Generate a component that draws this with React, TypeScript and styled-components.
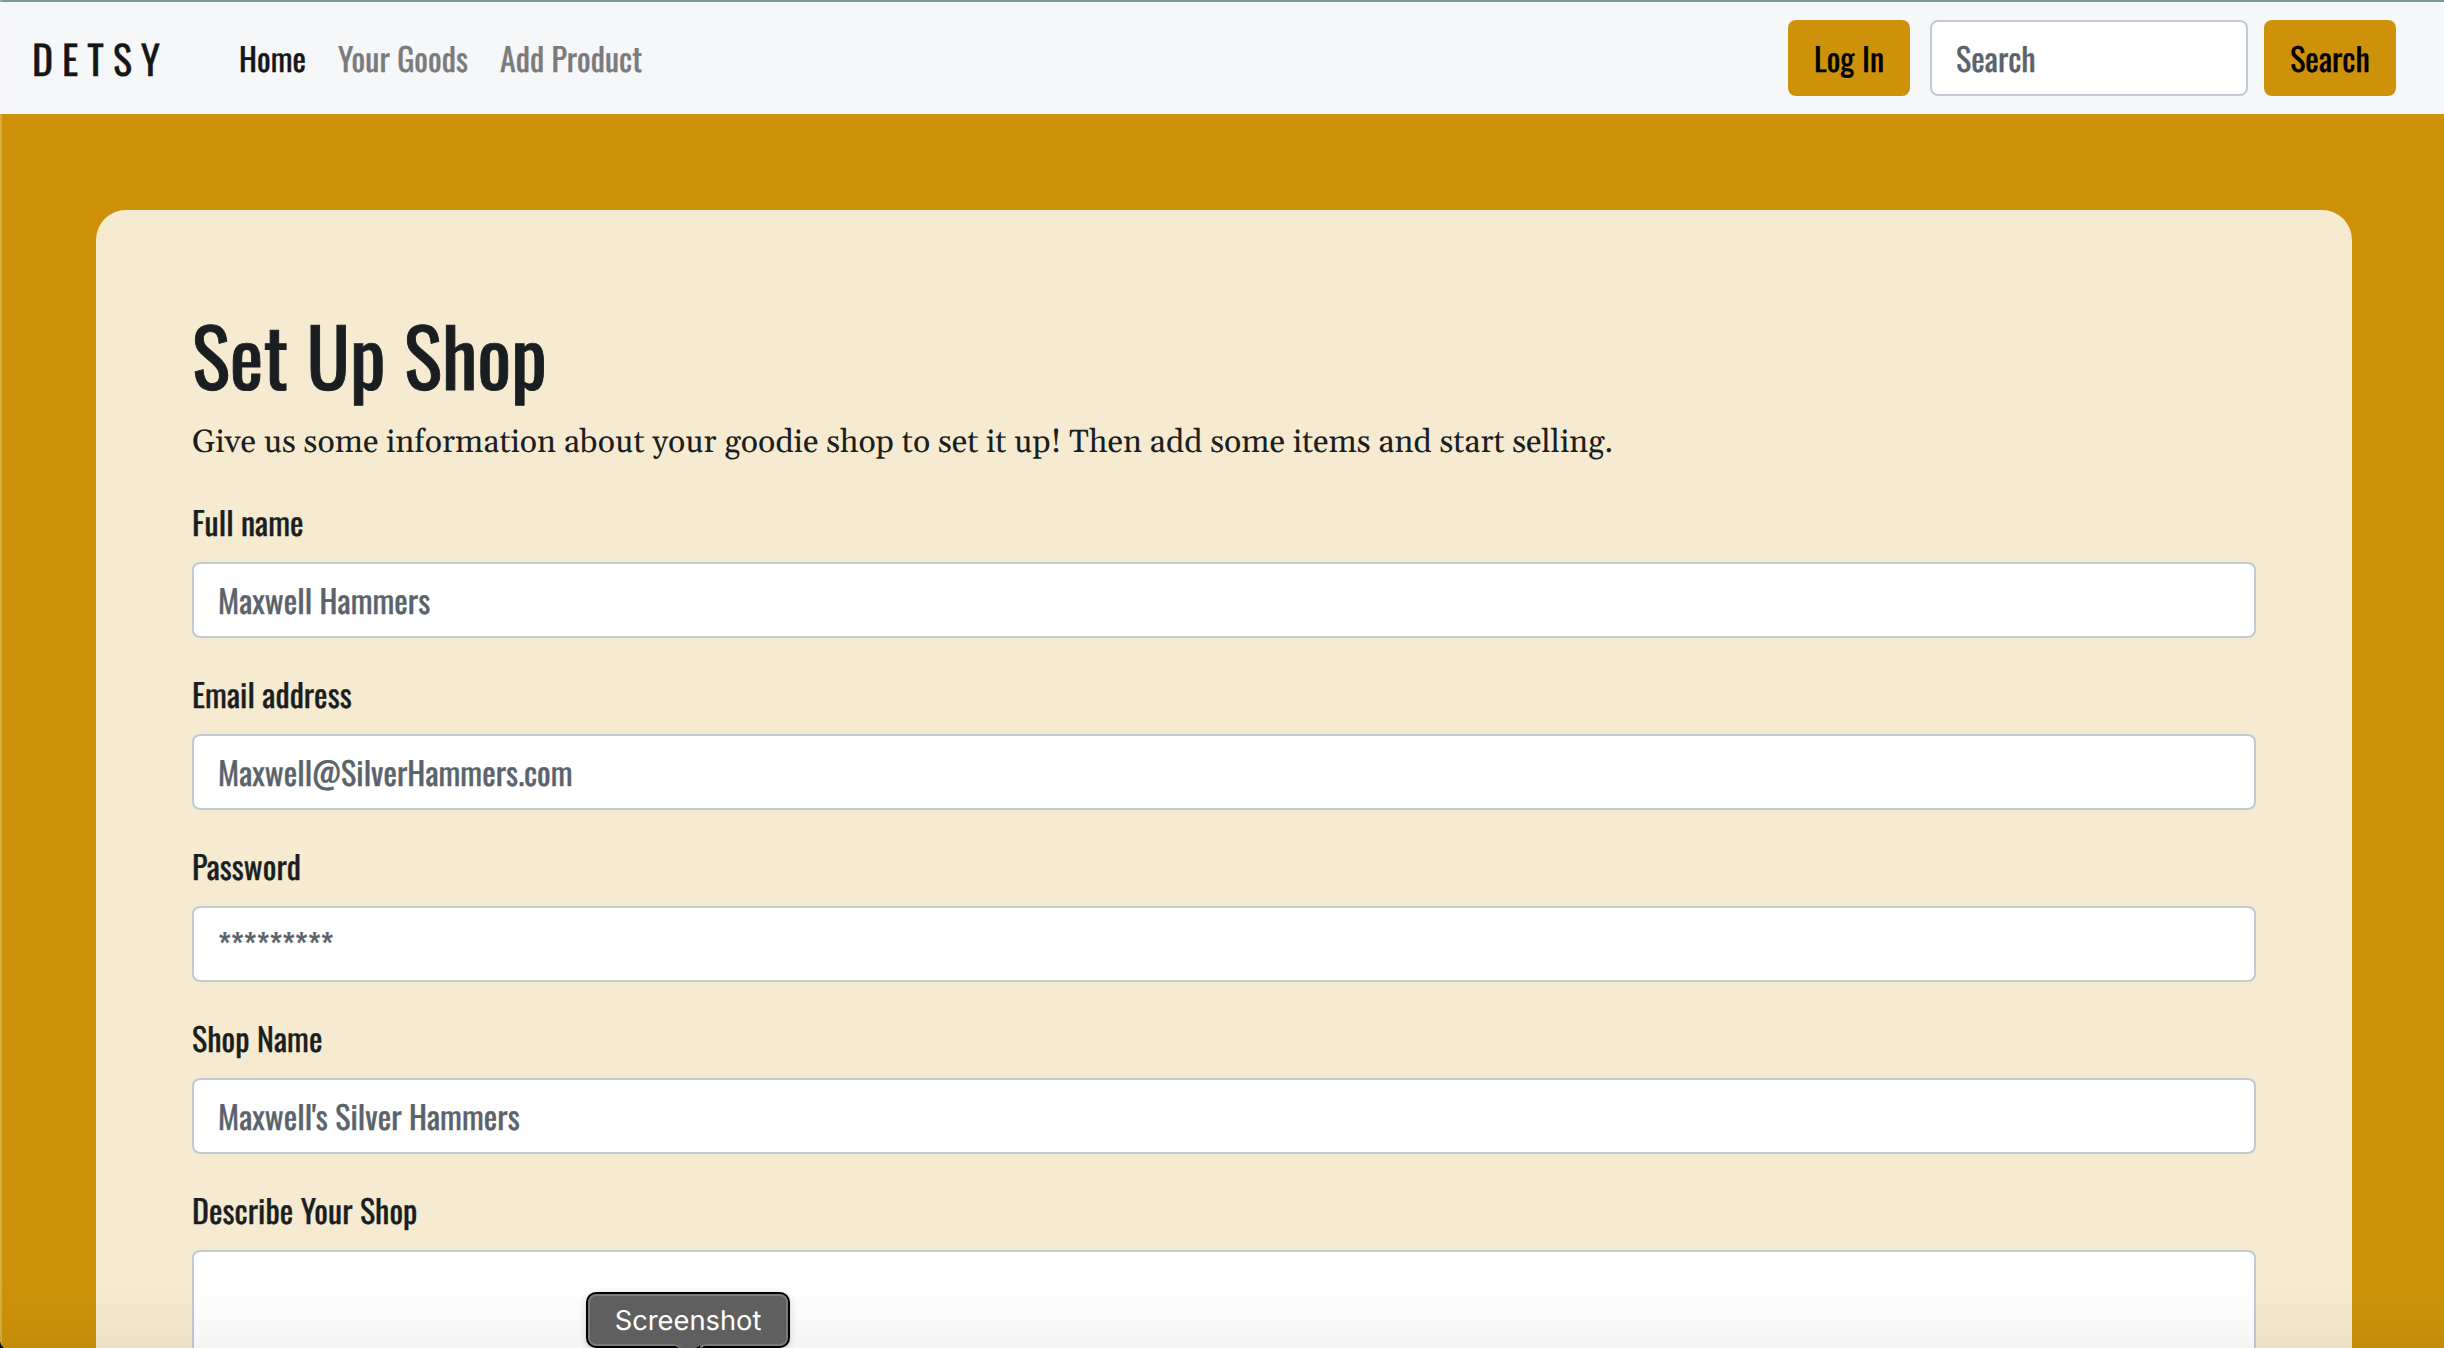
import React from "react";
import styled, { createGlobalStyle, css } from "styled-components";

const gold = "#cd9209";
const display = css`
  font-family: Oswald, "Roboto Condensed", sans-serif;
  font-size: 32px;
  font-weight: 400;
  line-height: 48px;
  letter-spacing: 0.07px;
  -webkit-text-stroke: 0.35px currentColor;
`;

const GlobalStyle = createGlobalStyle`
  *, *::before, *::after { box-sizing: border-box; text-rendering: geometricPrecision; }
  body { margin: 0; background: ${gold}; color: #1a1e21; overflow: hidden; }
  h1, p { margin: 0; }
`;

const Window = styled.div`
  position: relative;
  height: 1348px;
  overflow: hidden;
  background: ${gold};
`;

const Navbar = styled.nav`
  ${display}
  display: flex;
  align-items: center;
  height: 114px;
  padding: 0 48px 0 32px;
  border-top: 2px solid #76999a;
  background: #f6f7f9;
`;

const Brand = styled.a`
  font-size: 40px;
  line-height: 60px;
  letter-spacing: 9px;
  width: 207px;
  color: #161616;
`;

const Links = styled.div`
  display: flex;
  flex: 1;
  gap: 32px;
  padding-top: 2px;
`;

const NavLink = styled.a<{ $active?: boolean }>`
  color: ${(p) => (p.$active ? "#161616" : "#7b7b7c")};
`;

const Actions = styled.form`
  display: flex;
`;

const Button = styled.button<{ $width: number }>`
  ${display}
  width: ${(p) => p.$width}px;
  height: 76px;
  padding: 2px 0 0;
  border: 0;
  border-radius: 8px;
  background: ${gold};
  color: #000;
`;

const Input = styled.input`
  ${display}
  display: block;
  width: 100%;
  height: 76px;
  padding: 12px 24px;
  border: 2px solid #c3c9d3;
  border-radius: 8px;
  background: #fff;
  outline: 0;
  &::placeholder { color: #5a636c; -webkit-text-stroke-color: #5a636c; opacity: 1; }
`;

const SearchInput = styled(Input)`
  width: 318px;
  margin: 0 16px 0 20px;
`;

const TextArea = styled(Input).attrs({ as: "textarea" })`
  height: 220px;
  resize: none;
`;

const Card = styled.main`
  margin: 96px 92px 0 96px;
  height: 1400px;
  padding: 97px 96px 96px;
  border-radius: 30px;
  background: #f6ead0;
`;

const Title = styled.h1`
  ${display}
  font-size: 80px;
  line-height: 96px;
  letter-spacing: 0;
  margin-bottom: 16px;
  -webkit-text-stroke-width: 0.9px;
`;

const Lead = styled.p`
  font-family: Gelasio, Georgia, serif;
  font-size: 32px;
  line-height: 48px;
  margin-bottom: 30px;
`;

const Fields = styled.div`
  display: grid;
  gap: 31px;
`;

const Field = styled.label`
  ${display}
  display: grid;
  gap: 15px;
  padding-top: 1px;
  margin-bottom: 1px;
  &:first-child { padding-top: 2px; }
  &:first-child { margin-bottom: 1px; }
`;

const BottomShade = styled.div`
  position: absolute;
  inset: auto 0 0 0;
  height: 76px;
  background: linear-gradient(rgba(0, 0, 0, 0), rgba(0, 0, 0, 0.012) 45%, rgba(0, 0, 0, 0.042));
  pointer-events: none;
`;

const LeftEdge = styled.div`
  position: absolute;
  inset: 0 auto 0 0;
  width: 2px;
  background: rgba(255, 255, 255, 0.22);
`;

const Corner = styled.svg`
  position: absolute;
  left: 0;
  bottom: 0;
`;

const Tooltip = styled.div`
  position: absolute;
  left: 586px;
  top: 1292px;
  width: 204px;
  height: 56px;
  display: flex;
  justify-content: center;
  border: 2px solid #000;
  border-radius: 10px;
  box-shadow: inset 0 0 0 2px #7b7b7b, 0 2px 8px rgba(0, 0, 0, 0.15);
  background: #5f5f5f;
  color: #fff;
  font: 400 27.3px/53px Inter, sans-serif;
`;

const Notch = styled.svg`
  position: absolute;
  left: 84px;
  bottom: -2px;
`;

const FieldCaption = styled.span`
  height: 48px;
`;

const fields = [
  { label: "Full name", hint: "Maxwell Hammers", type: "text" },
  { label: "Email address", hint: "Maxwell@SilverHammers.com", type: "email" },
  { label: "Password", hint: "*********", type: "password" },
  { label: "Shop Name", hint: "Maxwell's Silver Hammers", type: "text" },
];

export default function App() {
  return (
    <Window>
      <GlobalStyle />
      <Navbar>
        <Brand>DETSY</Brand>
        <Links>
          <NavLink $active>Home</NavLink>
          <NavLink>Your Goods</NavLink>
          <NavLink>Add Product</NavLink>
        </Links>
        <Actions>
          <Button type="button" $width={122}>Log In</Button>
          <SearchInput placeholder="Search" />
          <Button type="button" $width={132}>Search</Button>
        </Actions>
      </Navbar>
      <Card>
        <Title>Set Up Shop</Title>
        <Lead>
          Give us some information about your goodie shop to set it up! Then add some items and start selling.
        </Lead>
        <Fields>
          {fields.map((f) => (
            <Field key={f.label}>
              <FieldCaption>{f.label}</FieldCaption>
              <Input type={f.type} placeholder={f.hint} />
            </Field>
          ))}
          <Field>
            <FieldCaption>Describe Your Shop</FieldCaption>
            <TextArea />
          </Field>
        </Fields>
      </Card>
      <BottomShade />
      <LeftEdge />
      <Corner width="4" height="8" viewBox="0 0 4 8">
        <path d="M0 1Q1 6 4 8H0Z" fill="#0b0d12" />
      </Corner>
      <Tooltip>
        Screenshot
        <Notch width="36" height="4" viewBox="0 0 36 4">
          <path d="M0 0H36L28 1.5L24 4H8L4 1.5Z" fill="#5f5f5f" />
          <path d="M1 1Q5 1 8 4M35 1Q31 1 28 4" fill="none" stroke="#7b7b7b" strokeWidth="1.5" />
        </Notch>
      </Tooltip>
    </Window>
  );
}
